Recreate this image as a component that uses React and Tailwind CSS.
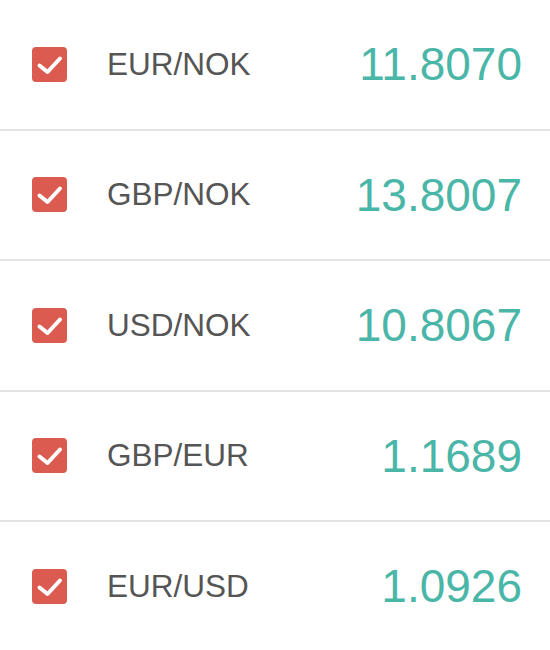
import React from "react";

const rows = [
  ["EUR/NOK", "11.8070"],
  ["GBP/NOK", "13.8007"],
  ["USD/NOK", "10.8067"],
  ["GBP/EUR", "1.1689"],
  ["EUR/USD", "1.0926"],
];

function Check() {
  return (
    <div className="w-[35px] h-[35px] rounded-[4px] bg-[#dc5b50] flex items-center justify-center shrink-0">
      <svg width="35" height="35" viewBox="0 0 35 35">
        <path d="M7.5 18.5 L15.5 25 L28 11.5" fill="none" stroke="#fff" strokeWidth="4" strokeLinecap="round" strokeLinejoin="round" />
      </svg>
    </div>
  );
}

export default function App() {
  return (
    <div className="w-[550px] bg-white font-['Liberation_Sans',Arial,sans-serif]">
      {rows.map(([pair, val]) => (
        <div key={pair} className="h-[130.5px] border-b-2 border-[#e3e3e3] flex items-center pl-[32px] pr-[28px]">
          <Check />
          <span className="ml-[40px] text-[31.5px] text-[#555555] leading-none">{pair}</span>
          <span className="ml-auto text-[46px] text-[#4ab6a8] leading-none">{val}</span>
        </div>
      ))}
    </div>
  );
}
